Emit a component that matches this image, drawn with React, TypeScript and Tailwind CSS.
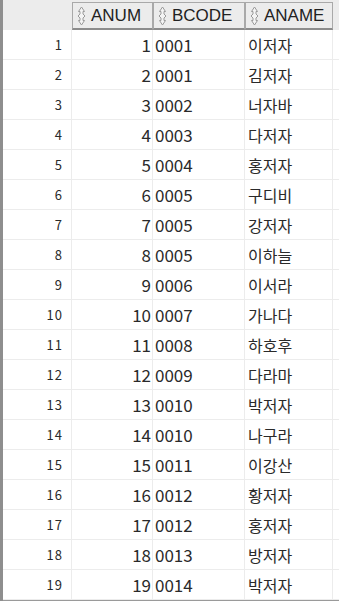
const rows = [
  [1, '0001', '이저자'],
  [2, '0001', '김저자'],
  [3, '0002', '너자바'],
  [4, '0003', '다저자'],
  [5, '0004', '홍저자'],
  [6, '0005', '구디비'],
  [7, '0005', '강저자'],
  [8, '0005', '이하늘'],
  [9, '0006', '이서라'],
  [10, '0007', '가나다'],
  [11, '0008', '하호후'],
  [12, '0009', '다라마'],
  [13, '0010', '박저자'],
  [14, '0010', '나구라'],
  [15, '0011', '이강산'],
  [16, '0012', '황저자'],
  [17, '0012', '홍저자'],
  [18, '0013', '방저자'],
  [19, '0014', '박저자'],
] as const

function SortIcon() {
  return (
    <svg width="9" height="20" viewBox="0 0 9 20" className="shrink-0">
      <path
        d="M4.5 1 L7.5 5.5 L6 5.5 L6 8 L8 10 L6 12 L6 14.5 L7.5 14.5 L4.5 19 L1.5 14.5 L3 14.5 L3 12 L1 10 L3 8 L3 5.5 L1.5 5.5 Z"
        fill="#f4f4f4"
        stroke="#9a9a9a"
        strokeWidth="1"
        strokeLinejoin="round"
      />
    </svg>
  )
}

function HeadCell({ label, w }: { label: string; w: string }) {
  return (
    <div className={`${w} flex h-[28px] items-center gap-[5px] border border-[#a9a9a9] border-b-[2px] border-b-[#8c8c8c] bg-[#ececec] pl-[4px] text-[17px] text-[#222]`}>
      <SortIcon />
      <span style={{ fontFamily: '"Liberation Sans", Arial, sans-serif' }}>{label}</span>
    </div>
  )
}

export default function App() {
  return (
    <div
      className="flex h-[601px] w-[339px] bg-white"
      style={{ fontFamily: '"Noto Sans CJK KR", sans-serif' }}
    >
      <div className="w-[3px] shrink-0 bg-[#8e8e8e]" />
      <div className="flex flex-1 flex-col">
        <div className="flex h-[30px] items-end bg-[#ececec] pt-[2px]">
          <div className="w-[69px] shrink-0" />
          <HeadCell label="ANUM" w="w-[81px]" />
          <HeadCell label="BCODE" w="w-[92px]" />
          <HeadCell label="ANAME" w="w-[88px]" />
        </div>
        <div className="flex flex-col">
          {rows.map(([n, code, name]) => (
            <div key={n} className="flex h-[30px] border-b border-[#ececec] text-[#2a2a2a]">
              <div className="flex w-[69px] shrink-0 items-center justify-end border-r border-[#ececec] pr-[8px] text-[13px] tracking-[1px]">
                {n}
              </div>
              <div className="flex w-[81px] items-center justify-end border-r border-[#ececec] pr-[1px] text-[17px]">
                {n}
              </div>
              <div className="flex w-[92px] items-center border-r border-[#ececec] pl-[2px] text-[17px]">
                {code}
              </div>
              <div className="flex w-[88px] items-center border-r border-[#ececec] pl-[3px] text-[16px]">
                {name}
              </div>
            </div>
          ))}
        </div>
        <div className="mt-auto h-[4px] border-t-2 border-[#9a9a9a] bg-[#f0f0f0]" />
      </div>
    </div>
  )
}
